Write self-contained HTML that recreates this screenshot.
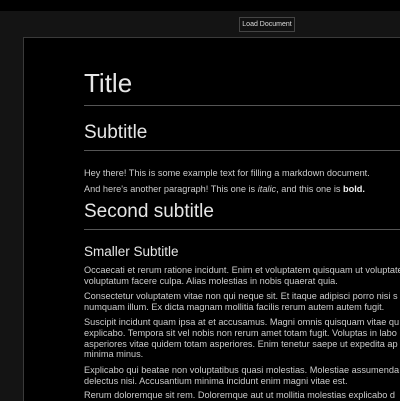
<!DOCTYPE html>
<html><head><style>
html,body{margin:0;padding:0;width:400px;height:400px;overflow:hidden;background:#141414;font-family:"Liberation Sans",Arial,sans-serif;}
.top{position:absolute;left:0;top:0;width:400px;height:11px;background:#000;}
.btn{position:absolute;left:239px;top:17px;width:54px;height:13px;border:1px solid #444;background:#111;color:#ddd;font-size:7px;line-height:13px;text-align:center;}
.doc{position:absolute;left:23px;top:37px;width:377px;height:363px;overflow:hidden;background:#000;border-left:1px solid #3a3a3a;border-top:1px solid #3a3a3a;}
.c{position:absolute;left:60px;top:0;width:360px;color:#e6e6e6;}
h1{position:absolute;top:30px;margin:0;font-weight:normal;font-size:26px;}
.hr{position:absolute;left:0;width:340px;height:1px;background:#555;}
h2{position:absolute;margin:0;font-weight:normal;font-size:19px;white-space:nowrap;}
h3{position:absolute;margin:0;font-weight:normal;font-size:13.5px;}
p{position:absolute;margin:0;font-size:9.2px;line-height:10.8px;color:#ccc;white-space:nowrap;}
</style></head><body>
<div class="top"></div>
<div class="btn">Load Document</div>
<div class="doc"><div class="c">
<h1>Title</h1>
<div class="hr" style="top:67px"></div>
<h2 style="top:84px">Subtitle</h2>
<div class="hr" style="top:112px"></div>
<p style="top:130px">Hey there! This is some example text for filling a markdown document.</p>
<p style="top:146px">And here's another paragraph! This one is <i>italic</i>, and this one is <b style="color:#eee">bold.</b></p>
<h2 style="top:163px">Second subtitle</h2>
<div class="hr" style="top:191px"></div>
<h3 style="top:206px">Smaller Subtitle</h3>
<p style="top:227px">Occaecati et rerum ratione incidunt. Enim et voluptatem quisquam ut voluptate<br>voluptatum facere culpa. Alias molestias in nobis quaerat quia.</p>
<p style="top:253px">Consectetur voluptatem vitae non qui neque sit. Et itaque adipisci porro nisi s<br>numquam illum. Ex dicta magnam mollitia facilis rerum autem autem fugit.</p>
<p style="top:279px">Suscipit incidunt quam ipsa at et accusamus. Magni omnis quisquam vitae qu<br>explicabo. Tempora sit vel nobis non rerum amet totam fugit. Voluptas in labo<br>asperiores vitae quidem totam asperiores. Enim tenetur saepe ut expedita ap<br>minima minus.</p>
<p style="top:327px">Explicabo qui beatae non voluptatibus quasi molestias. Molestiae assumenda<br>delectus nisi. Accusantium minima incidunt enim magni vitae est.</p>
<p style="top:352px">Rerum doloremque sit rem. Doloremque aut ut mollitia molestias explicabo d</p>
</div></div>
</body></html>
